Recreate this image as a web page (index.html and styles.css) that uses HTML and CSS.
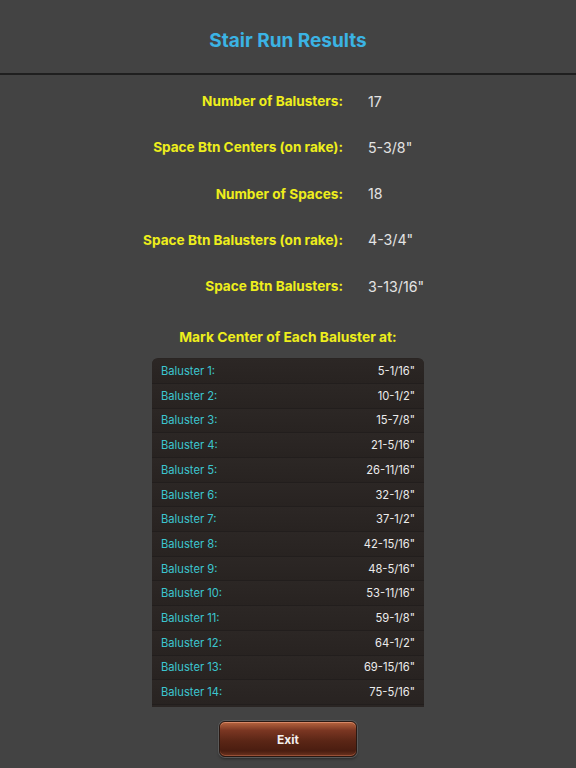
FILE: index.html
```html
<!DOCTYPE html>
<html>
<head>
<meta charset="utf-8">
<link rel="stylesheet" href="styles.css">
</head>
<body>
<div class="page">
  <header class="header">
    <h1 class="title">Stair Run Results</h1>
  </header>
  <div class="summary">
    <div class="s-label">Number of Balusters:</div><div class="s-value">17</div>
    <div class="s-label">Space Btn Centers (on rake):</div><div class="s-value">5-3/8"</div>
    <div class="s-label">Number of Spaces:</div><div class="s-value">18</div>
    <div class="s-label">Space Btn Balusters (on rake):</div><div class="s-value">4-3/4"</div>
    <div class="s-label">Space Btn Balusters:</div><div class="s-value">3-13/16"</div>
  </div>
  <h2 class="mark">Mark Center of Each Baluster at:</h2>
  <div class="list">
    <div class="row"><span class="r-label">Baluster 1:</span><span class="r-value">5-1/16"</span></div>
    <div class="row"><span class="r-label">Baluster 2:</span><span class="r-value">10-1/2"</span></div>
    <div class="row"><span class="r-label">Baluster 3:</span><span class="r-value">15-7/8"</span></div>
    <div class="row"><span class="r-label">Baluster 4:</span><span class="r-value">21-5/16"</span></div>
    <div class="row"><span class="r-label">Baluster 5:</span><span class="r-value">26-11/16"</span></div>
    <div class="row"><span class="r-label">Baluster 6:</span><span class="r-value">32-1/8"</span></div>
    <div class="row"><span class="r-label">Baluster 7:</span><span class="r-value">37-1/2"</span></div>
    <div class="row"><span class="r-label">Baluster 8:</span><span class="r-value">42-15/16"</span></div>
    <div class="row"><span class="r-label">Baluster 9:</span><span class="r-value">48-5/16"</span></div>
    <div class="row"><span class="r-label">Baluster 10:</span><span class="r-value">53-11/16"</span></div>
    <div class="row"><span class="r-label">Baluster 11:</span><span class="r-value">59-1/8"</span></div>
    <div class="row"><span class="r-label">Baluster 12:</span><span class="r-value">64-1/2"</span></div>
    <div class="row"><span class="r-label">Baluster 13:</span><span class="r-value">69-15/16"</span></div>
    <div class="row"><span class="r-label">Baluster 14:</span><span class="r-value">75-5/16"</span></div>
  </div>
  <div class="footer">
    <button class="exit">Exit</button>
  </div>
</div>
</body>
</html>
```

FILE: styles.css
```css
html, body {
  margin: 0;
  padding: 0;
  background: #434343;
}
body {
  font-family: "Inter", "Roboto", "Liberation Sans", sans-serif;
}
.page {
  width: 576px;
  height: 768px;
  display: flex;
  flex-direction: column;
  align-items: center;
  overflow: hidden;
}
.header {
  width: 100%;
  height: 73px;
  border-bottom: 2px solid #1f1f1f;
  display: flex;
  align-items: center;
  justify-content: center;
}
.title {
  margin: 7px 0 0;
  font-size: 19px;
  font-weight: 700;
  color: #3bb3e4;
}
.summary {
  width: 100%;
  padding-top: 3px;
  display: grid;
  grid-template-columns: 343px 1fr;
  column-gap: 25px;
  grid-auto-rows: 46.25px;
  align-items: center;
}
.s-label {
  text-align: right;
  font-size: 13.6px;
  font-weight: 700;
  color: #eeee1c;
}
.s-value {
  font-size: 14.2px;
  color: #e4e4e4;
}
.mark {
  margin: 18px 0 0;
  height: 20px;
  line-height: 20px;
  font-size: 13.8px;
  font-weight: 700;
  color: #eeee1c;
}
.list {
  margin-top: 11px;
  width: 272px;
  height: 349px;
  overflow: hidden;
  background: linear-gradient(#2a2523, #2a2523) top / 100% 100% no-repeat, #2a2523;
  border-radius: 6px 6px 0 0;
  padding-top: 1px;
  box-sizing: border-box;
}
.row {
  height: 24.7px;
  box-sizing: border-box;
  display: flex;
  align-items: center;
  justify-content: space-between;
  padding: 0 9px;
  border-bottom: 1px solid #221e1d;
  background: linear-gradient(#2c2725, #282321);
}
.r-label {
  font-size: 11.2px;
  color: #3cc5d0;
}
.r-value {
  font-size: 11.2px;
  color: #ececec;
}
.footer {
  margin-top: 14px;
  display: flex;
  justify-content: center;
}
.exit {
  width: 138px;
  height: 36px;
  border-radius: 6px;
  border: 1px solid #2a1812;
  box-shadow: 0 0 0 1px #5a5a5a, 0 2px 3px rgba(0,0,0,0.4), inset 0 1px 0 #d88866, inset 0 -1px 0 #9a5036;
  background: linear-gradient(#b8653f 0%, #7a3622 25%, #5b2616 55%, #4a1d10 85%, #6d3420 100%);
  color: #f4f0ee;
  font-family: "Inter", "Roboto", "Liberation Sans", sans-serif;
  font-size: 12px;
  font-weight: 700;
  padding: 0;
}
```
